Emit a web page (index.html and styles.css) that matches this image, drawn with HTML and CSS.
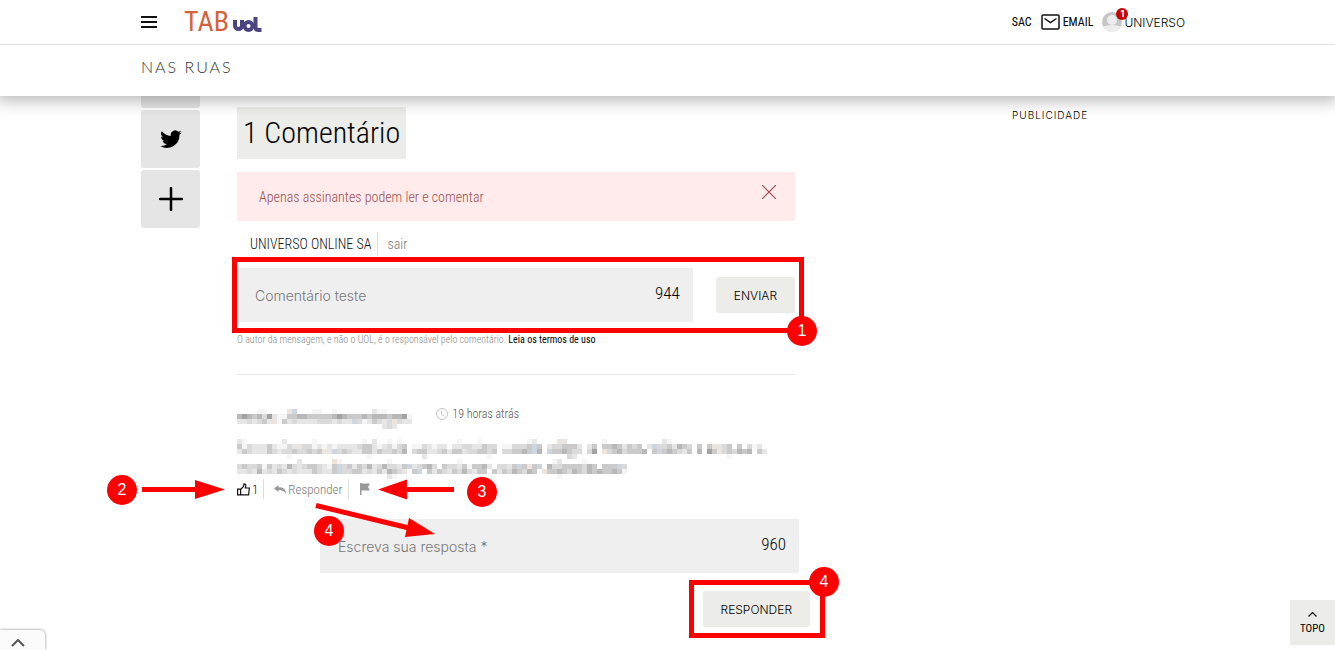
FILE: index.html
```html
<!DOCTYPE html>
<html lang="pt-BR">
<head>
    <meta charset="UTF-8">
    <meta name="viewport" content="width=device-width, initial-scale=1.0">
    <title>TAB UOL - Nas Ruas</title>
    <link rel="stylesheet" href="styles.css">
</head>
<body>

    <!-- fixed header -->
    <header class="header">
        <div class="topbar">
            <div class="container topbar-inner">
                <button type="button" class="menu" aria-label="Menu">
                    <svg width="16" height="12" viewBox="0 0 16 12"><path d="M0 1h16M0 6h16M0 11h16" stroke="#111" stroke-width="2"/></svg>
                </button>
                <a href="#" class="logo">
                    <span class="logo-tab">TAB</span>
                    <svg width="29" height="17" viewBox="0 0 29 17" aria-label="UOL" fill="none" stroke="#4a4580" stroke-width="4">
                        <path d="M2 4v5.500a3.500 3.500 0 0 0 7 0V4"/>
                        <circle cx="15.500" cy="10" r="4"/>
                        <path d="M22.500 1v10q0 3 3 3h3"/>
                    </svg>
                </a>
                <nav class="user-nav">
                    <a href="#">SAC</a>
                    <a href="#" class="email">
                        <svg width="19" height="16" viewBox="0 0 19 16" fill="none" stroke="#111" stroke-width="1.500"><rect x="1" y="1" width="17" height="14" rx="1"/><path d="M3.500 4.500l6 4 6-4"/></svg>
                        EMAIL
                    </a>
                    <a href="#" class="profile">
                        <svg width="20" height="20" viewBox="0 0 20 20"><circle cx="10" cy="10" r="10" fill="#c6c6c6"/><circle cx="10" cy="8" r="5" fill="#ededed"/><path d="M1 14.500q9-3 18 0a10 10 0 0 1-18 0z" fill="#ededed"/></svg>
                        <span class="count">1</span>
                        UNIVERSO
                    </a>
                </nav>
            </div>
        </div>
        <div class="subbar">
            <div class="container"><a href="#" class="section">NAS RUAS</a></div>
        </div>
    </header>

    <main class="container page">
        <!-- share buttons -->
        <aside class="share">
            <button type="button" aria-label="Facebook"></button>
            <button type="button" aria-label="Twitter">
                <svg width="22" height="22" viewBox="0 0 24 24"><path d="M23.600 4.900c-.8.400-1.800.7-2.700.8 1-.6 1.700-1.500 2.100-2.600-.9.500-1.900.9-3 1.100a4.800 4.800 0 0 0-8.200 4.400C7.800 8.400 4.300 6.500 1.900 3.600a4.800 4.800 0 0 0 1.500 6.400c-.8 0-1.500-.2-2.200-.6v.1c0 2.300 1.700 4.200 3.800 4.700-.7.200-1.400.2-2.100.1.600 1.900 2.400 3.300 4.500 3.300A9.700 9.700 0 0 1 .3 19.500 13.600 13.600 0 0 0 21.200 7.400c.9-.7 1.700-1.500 2.400-2.500z"/></svg>
            </button>
            <button type="button" aria-label="Mais opções">
                <svg width="24" height="24" viewBox="0 0 24 24"><path d="M12 1v22M1 12h22" stroke="#000" stroke-width="2.500" stroke-linecap="round"/></svg>
            </button>
        </aside>

        <section class="comments">
            <h1 class="title">1 Comentário</h1>

            <div class="alert">
                <p>Apenas assinantes podem ler e comentar</p>
                <button type="button" aria-label="Fechar">
                    <svg width="14" height="14" viewBox="0 0 14 14"><path d="M0 0l14 14M14 0L0 14" stroke="#9c4f4f" stroke-width="1.200"/></svg>
                </button>
            </div>

            <div class="account">
                <span class="account-name">UNIVERSO ONLINE SA</span>
                <a href="#">sair</a>
            </div>

            <form class="comment-form">
                <div class="field">
                    <input type="text" placeholder="Comentário teste" aria-label="Comentário">
                    <span class="chars">944</span>
                </div>
                <button type="submit" class="btn">ENVIAR</button>
                <div class="mark"></div>
                <span class="step step-1">1</span>
            </form>
            <p class="terms">O autor da mensagem, e não o UOL, é o responsável pelo comentário. <a href="#">Leia os termos de uso</a></p>

            <!-- comment with the reader's data hidden -->
            <article class="comment">
                <div class="comment-head">
                    <svg id="author" class="mosaic"></svg>
                    <span class="time">
                        <svg width="12" height="12" viewBox="0 0 12 12" fill="none" stroke="#c4c4c4"><circle cx="6" cy="6" r="5.500"/><path d="M5.500 3v3.500l2.500 1.500"/></svg>
                        19 horas atrás
                    </span>
                </div>
                <svg id="message" class="mosaic"></svg>

                <div class="actions">
                    <button type="button" class="like" aria-label="Curtir">
                        <svg width="13" height="13" viewBox="0 0 13 13" fill="none" stroke="#111" stroke-width="1.200"><path d="M.6 6.200h3v5.600h-3zM3.600 6.500L6.500 3.500 7 .8q2 0 1.800 2.200l-.5 2h4.100l-.8 6.800H5l-1.400-.6"/></svg>1
                    </button>
                    <button type="button" class="reply">
                        <svg width="12" height="9" viewBox="0 0 12 9" fill="#999"><path d="M0 3.500L4.500 0v2.200C9 2.200 12 4 12 9 10.500 6 8 5 4.500 5v2z"/></svg>
                        Responder
                    </button>
                    <button type="button" class="flag" aria-label="Denunciar">
                        <svg width="10" height="12" viewBox="0 0 10 12" fill="#999"><path d="M0 0h1.500v12H0zM1.500.500H10L8 4l2 3.500H1.500z"/></svg>
                    </button>
                </div>

                <form class="reply-form">
                    <div class="field">
                        <input type="text" placeholder="Escreva sua resposta *" aria-label="Resposta">
                        <span class="chars">960</span>
                    </div>
                    <div class="reply-submit">
                        <button type="submit" class="btn">RESPONDER</button>
                        <div class="mark"></div>
                        <span class="step step-4">4</span>
                    </div>
                </form>

                <!-- step arrows -->
                <svg class="arrows" width="440" height="80" viewBox="0 0 440 80" fill="red" stroke="red">
                    <path d="M35 19.500H90" stroke-width="5"/><path d="M88 10L118 19.500 88 29z" stroke="none"/>
                    <path d="M347 19.500H300" stroke-width="5"/><path d="M300 9.500L271 19.500 300 29.500z" stroke="none"/>
                    <path d="M209 35.500L302 58" stroke-width="5"/><path d="M302 48L328 64 298 67z" stroke="none"/>
                </svg>
                <span class="step step-2">2</span>
                <span class="step step-3">3</span>
                <span class="step step-reply">4</span>
            </article>
        </section>

        <aside class="ad">PUBLICIDADE</aside>
    </main>

    <button type="button" class="drawer" aria-label="Abrir">
        <svg width="14" height="8" viewBox="0 0 14 8"><path d="M1 7l6-6 6 6" fill="none" stroke="#555" stroke-width="2"/></svg>
    </button>
    <a href="#" class="to-top">
        <svg width="9" height="5" viewBox="0 0 9 5"><path d="M.5 4.500l4-4 4 4" fill="none" stroke="#111" stroke-width="1.200"/></svg>
        TOPO
    </a>

    <script src="mosaic.js"></script>
</body>
</html>
```
FILE: styles.css
```css
/* General styling */
* {
    box-sizing: border-box;
}

body {
    margin: 0;
    font-family: 'Roboto Condensed', Roboto, sans-serif;
    font-size: 14px;
    font-weight: 300;
    color: #000;
    background: #fff;
}

a {
    color: inherit;
    text-decoration: none;
}

button {
    padding: 0;
    border: 0;
    background: none;
    font: inherit;
    color: inherit;
    cursor: pointer;
}

svg {
    display: block;
}

.container {
    max-width: 1053px;
    margin: 0 auto;
}

/* Header */
.header {
    position: sticky;
    top: 0;
    z-index: 10;
    background: #fff;
    box-shadow: 0 0 16px 4px rgba(0, 0, 0, 0.3);
}

.topbar {
    border-bottom: 1px solid #e0e0e0;
}

.topbar-inner {
    display: flex;
    align-items: center;
    height: 44px;
}

.logo {
    display: flex;
    align-items: center;
    gap: 5px;
    margin-left: 27px;
}

.logo-tab {
    width: 44px;
    color: #d4633a;
    font-size: 28px;
    font-weight: 400;
    line-height: 40px;
}

.logo svg {
    margin-top: 5px;
}

.user-nav {
    display: flex;
    align-items: center;
    gap: 9px;
    margin-left: auto;
    margin-right: 9px;
    font-size: 12px;
    font-weight: 400;
}

.email {
    display: flex;
    align-items: center;
    gap: 3px;
}

.profile {
    position: relative;
    display: flex;
    align-items: center;
    gap: 2px;
    font-family: Inter, sans-serif;
    font-weight: 300;
}

.count {
    position: absolute;
    left: 14px;
    top: -4px;
    width: 12px;
    border-radius: 50%;
    background: #c80000;
    color: #fff;
    font-size: 9px;
    font-weight: bold;
    line-height: 12px;
    text-align: center;
}

.subbar {
    height: 51px;
}

.section {
    font-family: Lato, sans-serif;
    font-size: 16px;
    line-height: 43px;
    letter-spacing: 2px;
    color: #333;
}

/* Page columns */
.page {
    display: flex;
    align-items: flex-start;
}

.share {
    display: flex;
    flex-direction: column;
    gap: 2px;
    flex: 0 0 59px;
    margin: -46px 37px 0 0;
}

.share button {
    display: flex;
    align-items: center;
    justify-content: center;
    height: 58px;
    border-radius: 3px;
    background: #e5e5e5;
}

.comments {
    flex: 0 1 558px;
    padding-top: 11px;
}

.ad {
    margin-left: auto;
    width: 182px;
    padding-top: 12px;
    font-family: Inter, sans-serif;
    font-size: 10px;
    line-height: 14px;
    letter-spacing: 1px;
}

.title {
    width: fit-content;
    margin: 0 0 13px;
    padding: 0 6px;
    background: #ecece8;
    font-size: 30px;
    font-weight: 300;
    line-height: 52px;
}

.alert {
    display: flex;
    justify-content: space-between;
    align-items: flex-start;
    height: 49px;
    padding: 13px 19px 0 22px;
    background: #ffebeb;
    color: #9c4f4f;
}

.alert p {
    margin: 0;
    line-height: 25px;
}

.account {
    display: flex;
    align-items: center;
    height: 47px;
    padding: 0 13px 2px;
    color: #777;
}

.account-name {
    margin-right: 9px;
    padding-right: 6px;
    border-right: 1px solid #ddd;
    color: #111;
    line-height: 24px;
}

/* Forms */
.comment-form {
    position: relative;
    display: flex;
    align-items: center;
    gap: 23px;
}

.field {
    display: flex;
    flex: 1;
    height: 54px;
    padding: 0 13px 0 18px;
    background: #efefef;
}

.field input {
    flex: 1;
    min-width: 0;
    padding: 0;
    border: 0;
    outline: 0;
    background: none;
    font-family: Inter, sans-serif;
    font-size: 14px;
    font-weight: 300;
}

.field input::placeholder {
    color: #777;
}

.chars {
    font-size: 17px;
    line-height: 50px;
}

.btn {
    height: 36px;
    padding: 0 18px;
    border-radius: 3px;
    background: #ecece8;
    font-family: Inter, sans-serif;
    font-size: 12px;
}

.terms {
    margin: 0;
    padding: 9px 0 26px;
    border-bottom: 1px solid #e8e8e8;
    color: #888;
    font-size: 10px;
    line-height: 17px;
}

.terms a {
    color: #000;
    font-weight: 400;
}

/* Comment */
.comment {
    position: relative;
    padding-top: 29px;
}

.comment-head {
    display: flex;
    justify-content: space-between;
    width: 282px;
    height: 35px;
    padding-top: 5px;
}

.time {
    display: flex;
    align-items: center;
    gap: 4px;
    height: 10px;
    font-size: 12px;
    color: #555;
}

.actions {
    display: flex;
    align-items: center;
    height: 20px;
    color: #777;
    font-size: 13px;
}

.actions button {
    display: flex;
    align-items: center;
    height: 20px;
}

.actions .like {
    gap: 2px;
    padding-right: 5px;
    color: #111;
}

.actions .reply {
    gap: 2px;
    padding: 0 6px 0 10px;
    border: solid #ddd;
    border-width: 0 1px;
}

.actions .flag {
    padding-left: 11px;
}

.reply-form {
    margin: 20px -4px 0 83px;
}

.reply-submit {
    position: relative;
    width: fit-content;
    margin: 18px -11px 23px auto;
}

/* Step marks */
.mark {
    position: absolute;
    inset: -11px -9px -11px -5px;
    border: 5px solid red;
    pointer-events: none;
}

.reply-submit .mark {
    inset: -11px -15px -11px -14px;
}

.step {
    position: absolute;
    width: 30px;
    border-radius: 50%;
    background: red;
    color: #fff;
    font-family: 'Liberation Sans', sans-serif;
    font-size: 16px;
    font-weight: 400;
    line-height: 30px;
    text-align: center;
}

.step-1 {
    right: -22px;
    bottom: -24px;
}

.step-2 {
    left: -130px;
    top: 100px;
}

.step-3 {
    left: 230px;
    top: 102px;
}

.step-reply {
    left: 77px;
    top: 141px;
}

.step-4 {
    right: -29px;
    top: -24px;
}

.arrows {
    position: absolute;
    left: -130px;
    top: 95px;
    pointer-events: none;
}

/* Fixed buttons */
.drawer {
    position: fixed;
    left: 0;
    bottom: 0;
    width: 45px;
    height: 20px;
    padding: 6px 0 0 11px;
    border-radius: 0 5px 0 0;
    background: #fafafa;
    box-shadow: 0 0 3px rgba(0, 0, 0, 0.5);
}

.to-top {
    position: fixed;
    right: 0;
    bottom: 5px;
    display: flex;
    flex-direction: column;
    align-items: center;
    gap: 6px;
    width: 45px;
    height: 45px;
    padding-top: 12px;
    background: #ecece8;
    font-size: 11px;
    font-weight: 400;
    line-height: 12px;
}
```
FILE: mosaic.js
```js
// blocks that hide the name and the text of the comment
const size = 5;
const colors = {
    1: '#f5f5f5', 2: '#e6e6e6', 3: '#dadada', 4: '#cacaca',
    5: '#b8b8b8', 6: '#a2a2a2', b: '#cdd5e0', w: '#efe4dc'
};

const author = [
    '....11....wb...11..1.......211.....',
    '56545362114455444445654445455545561',
    '2232342w142322223332322b3124323w322',
    '.............................232...'
];

const message = [
    '21.......2.....1.........1.2..1.1...........1...1.........12....w2.......1...........21...................',
    '413222421132w331212122223442123134.1132122.223322433.113334b4.2334442.24.44542434.2b3342543.4.4w234.4.312.',
    '24322243233433434w2b34322442433435.34422342442334434.334454b5.b445433.36.w34534445.4b454324.5.64w343545.42',
    '..........1...............1..........2............1...............32..............................1.......',
    '............2......w1.........1.............1..................12....1........',
    '34334142325323443214b3424352353324b23453.4332414452.3324b4w4b.5334444354.444b3',
    '22325232432322243224b3344232425432.4b.424324353244.424354354.w4454354354544541',
    '..............................21................................1.............'
];

function draw(id, rows) {
    const svg = document.getElementById(id);
    svg.setAttribute('width', Math.max(...rows.map(row => row.length)) * size);
    svg.setAttribute('height', rows.length * size);
    rows.forEach((row, y) => {
        [...row].forEach((cell, x) => {
            if (!colors[cell]) return;
            const rect = document.createElementNS('http://www.w3.org/2000/svg', 'rect');
            rect.setAttribute('x', x * size);
            rect.setAttribute('y', y * size);
            rect.setAttribute('width', size);
            rect.setAttribute('height', size);
            rect.setAttribute('fill', colors[cell]);
            svg.appendChild(rect);
        });
    });
}

draw('author', author);
draw('message', message);
```
